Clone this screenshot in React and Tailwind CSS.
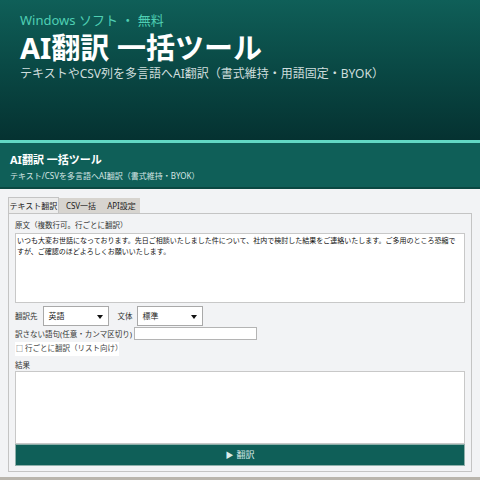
import React from "react";

const F = { fontFamily: '"Noto Sans", "Noto Sans CJK JP", sans-serif' };

function Select({ value, w }) {
  return (
    <div className={`relative flex h-[20px] ${w} items-center border border-[#a9a9a9] bg-white pl-[5px] text-[8px] text-[#222]`}>
      <span>{value}</span>
      <span className="absolute right-[5px] top-[8px] h-0 w-0 border-x-[3px] border-t-[4px] border-x-transparent border-t-[#111]" />
    </div>
  );
}

export default function App() {
  return (
    <div className="h-[480px] w-[480px] overflow-hidden bg-[#f2f3f5]" style={F}>
      {/* Hero */}
      <div className="h-[140px] bg-gradient-to-b from-[#0f5f58] to-[#053231] pl-[20px] pt-[11px]">
        <div className="text-[13px] leading-[18px] text-[#4fcfb3]">Windows ソフト ・ 無料</div>
        <div className="mt-[2px] text-[29px] font-bold leading-[34px] text-white">AI翻訳 一括ツール</div>
        <div className="mt-[1px] text-[12px] leading-[16px] text-[#cfdedd]">
          テキストやCSV列を多言語へAI翻訳（書式維持・用語固定・BYOK）
        </div>
      </div>

      {/* App title bar */}
      <div className="border-t-[3px] border-b-[2px] border-t-[#62d8c4] border-b-[#0a4842] bg-[#0f5f58] pl-[10px] pt-[10px] pb-[5px]">
        <div className="text-[11px] font-bold leading-[14px] text-white">AI翻訳 一括ツール</div>
        <div className="mt-[3px] text-[8px] leading-[12px] text-[#d6e6e4]">
          テキスト/CSVを多言語へAI翻訳（書式維持・BYOK）
        </div>
      </div>

      {/* Body */}
      <div className="px-[8px] pt-[8px]">
        <div className="flex h-[16px] items-end text-[8px] text-[#222]">
          <div className="flex h-[16px] w-[51px] items-center justify-center border-x border-t border-[#c4c4c4] bg-[#ececec]">
            テキスト翻訳
          </div>
          <div className="flex h-[15px] w-[44px] items-center justify-center bg-[#d7d4cf]">CSV一括</div>
          <div className="flex h-[15px] w-[37px] items-center justify-center bg-[#d7d4cf]">API設定</div>
        </div>

        <div className="border border-[#c4c4c4] bg-[#f2f3f5] pl-[6px] pr-[6px] pt-[5px] pb-[5px] text-[7.5px] text-[#333]">
          <div className="leading-[12px]">原文（複数行可。行ごとに翻訳）</div>
          <div className="mt-[2px] h-[70px] border border-[#c8c8c8] bg-white px-[1px] pt-[1px] text-[7px] leading-[11px] text-[#111]">
            いつも大変お世話になっております。先日ご相談いたしました件について、社内で検討した結果をご連絡いたします。ご多用のところ恐縮で
            <br />
            すが、ご確認のほどよろしくお願いいたします。
          </div>

          <div className="mt-[3px] flex items-center">
            <span className="mr-[5px] leading-[12px]">翻訳先</span>
            <Select value="英語" w="w-[66px]" />
            <span className="ml-[9px] mr-[4px] leading-[12px]">文体</span>
            <Select value="標準" w="w-[66px]" />
          </div>

          <div className="mt-[1px] flex items-center">
            <span className="mr-[2px] whitespace-nowrap leading-[12px]">訳さない語句(任意・カンマ区切り)</span>
            <div className="h-[13px] w-[123px] border border-[#b4b4b4] bg-white" />
          </div>

          <div className="mt-[2px] flex h-[14px] w-[104px] items-center whitespace-nowrap bg-white pl-[1px] text-[#444]">
            <span className="mr-[2px] text-[7px]">□</span>
            <span>行ごとに翻訳（リスト向け）</span>
          </div>

          <div className="mt-[3px] leading-[12px]">結果</div>
          <div className="h-[73px] border border-[#c8c8c8] bg-white" />
          <div className="flex h-[22px] items-center justify-center border border-[#8fb0ab] bg-[#0f5f58] text-[9px] text-[#dcecea]">
            <span className="mr-[3px] text-[8px]">▶</span>翻訳
          </div>
        </div>
      </div>
      <div className="mt-[5px] h-[10px] bg-[#b9b5ad]" />
    </div>
  );
}
